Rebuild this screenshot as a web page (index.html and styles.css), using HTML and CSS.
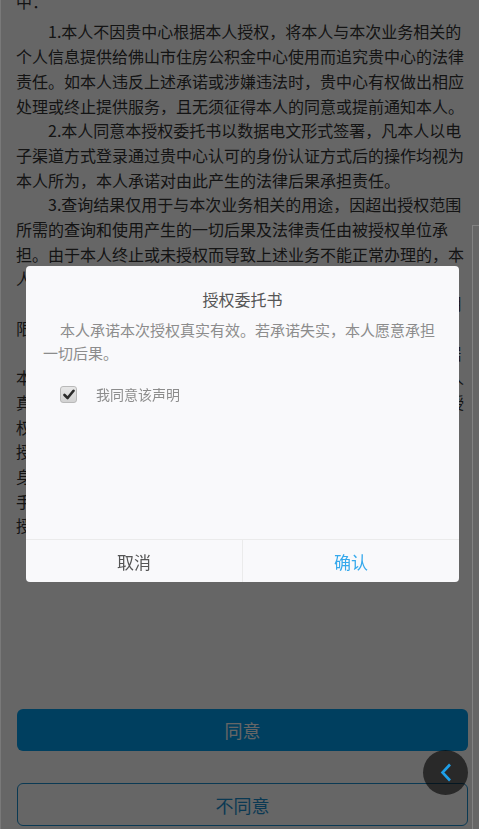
FILE: index.html
```html
<!DOCTYPE html>
<html lang="zh-CN">
<head>
    <meta charset="UTF-8">
    <meta name="viewport" content="width=device-width, initial-scale=1.0">
    <title>授权委托书</title>
    <link rel="stylesheet" href="styles.css">
</head>
<body>
<div class="page">
  <div class="content">
    <p class="lead">本人授权贵中心查询相关信息，并承诺在本次业务办理过程中：</p>
    <p>1.本人不因贵中心根据本人授权，将本人与本次业务相关的个人信息提供给佛山市住房公积金中心使用而追究贵中心的法律责任。如本人违反上述承诺或涉嫌违法时，贵中心有权做出相应处理或终止提供服务，且无须征得本人的同意或提前通知本人。</p>
    <p>2.本人同意本授权委托书以数据电文形式签署，凡本人以电子渠道方式登录通过贵中心认可的身份认证方式后的操作均视为本人所为，本人承诺对由此产生的法律后果承担责任。</p>
    <p>3.查询结果仅用于与本次业务相关的用途，因超出授权范围所需的查询和使用产生的一切后果及法律责任由被授权单位承担。由于本人终止或未授权而导致上述业务不能正常办理的，本人自行承担相应后果。</p>
    <p>4.本授权委托书自本人点击确认按钮时起生效，授权有效期限为本次业务办理完毕之日止。</p>
    <p>5.本人同意贵中心在办理上述业务的过程中，可以直接依据本人提交的信息、资料进行审核，本人确认提交的内容均为本人真实意思表示，如信息不实造成损失，由本人承担法律责任。授权委托书一经确认即生效，本人已仔细阅读并已理解上述内容，授权事项及法律后果均已知悉，同意贵中心据此办理相关业务。身份信息发生变更的，本人应及时告知贵中心并重新进行授权。手机号变更前已发生的查询行为及其后果，仍由本人自行承担。授权单位应妥善保管本人信息，不得用于其他用途。</p>
  </div>
  <div class="actions">
    <button class="btn btn-primary" type="button">同意</button>
    <button class="btn btn-outline" type="button">不同意</button>
  </div>
</div>

<div class="mask"></div>
<div class="scroll-edge"></div>

<div class="dialog">
  <div class="dialog-title">授权委托书</div>
  <p class="dialog-text">本人承诺本次授权真实有效。若承诺失实，本人愿意承担一切后果。</p>
  <label class="agree">
    <span class="check">
      <svg width="12" height="11" viewBox="0 0 12 11"><path d="M1.5 6 L4.6 9 L10.5 1.8" fill="none" stroke="#2b2b2b" stroke-width="2.6" stroke-linecap="round" stroke-linejoin="round"/></svg>
    </span>
    <span class="agree-text">我同意该声明</span>
  </label>
  <div class="dialog-footer">
    <button class="dialog-btn" type="button">取消</button>
    <button class="dialog-btn confirm" type="button">确认</button>
  </div>
</div>

<button class="back" type="button">
  <svg width="12" height="19" viewBox="0 0 12 19"><path d="M10 1.5 L2.5 9.5 L10 17.5" fill="none" stroke="#1e9fe8" stroke-width="2.6"/></svg>
</button>
</body>
</html>
```

FILE: styles.css
```css
* {
  box-sizing: border-box;
}
html,
body {
  margin: 0;
  height: 100%;
}
body {
  font-family: "Noto Sans CJK SC", "Noto Sans", sans-serif;
  background-color: #fff;
  color: #333;
  overflow: hidden;
}
button {
  font-family: inherit;
  border: none;
  cursor: pointer;
}
.page {
  height: 829px;
}
.content {
  margin-top: -36px;
  padding: 0 13px 0 16px;
  font-size: 16px;
  line-height: 24.7px;
  text-spacing-trim: space-all;
}
.content p {
  margin: 0;
  text-indent: 2em;
}
.content p.lead {
  margin-bottom: 6px;
}
.actions {
  margin-top: 171px;
  padding: 0 11px 0 17px;
  display: flex;
  flex-direction: column;
  gap: 32px;
}
.btn {
  width: 100%;
  height: 42px;
  border-radius: 6px;
  font-size: 18px;
}
.btn-primary {
  background-color: #009ded;
  color: #fff;
}
.btn-outline {
  height: 43px;
  background-color: #fff;
  border: 1px solid #1a8fd0;
  color: #1a8fd0;
}
.mask {
  position: fixed;
  top: 0;
  left: 0;
  right: 0;
  bottom: 0;
  background-color: rgba(0, 0, 0, 0.6);
  border-left: 1px solid rgba(255, 255, 255, 0.12);
}
.scroll-edge {
  position: fixed;
  left: 472px;
  top: 225px;
  right: 0;
  bottom: 0;
  border-left: 1px solid rgba(255, 255, 255, 0.18);
  border-top: 1px solid rgba(255, 255, 255, 0.18);
}
.dialog {
  position: fixed;
  left: 26px;
  top: 266px;
  width: 433px;
  height: 316px;
  background-color: #f9f9fb;
  border-radius: 4px;
  display: flex;
  flex-direction: column;
  padding-top: 21px;
}
.dialog-title {
  text-align: center;
  font-size: 16px;
  line-height: 24px;
  color: #555;
}
.dialog-text {
  margin: 7px 0 0;
  padding: 0 16px 0 17px;
  font-size: 15px;
  line-height: 23px;
  text-indent: 17px;
  color: #8c8c8c;
}
.agree {
  display: flex;
  align-items: center;
  margin: 20px 0 0 34px;
  height: 20px;
}
.check {
  width: 17px;
  height: 17px;
  border: 1px solid #b9b9b9;
  border-radius: 3px;
  background: linear-gradient(#e6e6e6, #d2d2d2);
  display: flex;
  align-items: center;
  justify-content: center;
}
.agree-text {
  margin-left: 19px;
  font-size: 14px;
  color: #8c8c8c;
}
.dialog-footer {
  margin-top: auto;
  height: 43px;
  border-top: 1px solid #ebebeb;
  display: flex;
}
.dialog-btn {
  flex: 1;
  background: none;
  font-size: 17px;
  color: #555;
}
.dialog-btn.confirm {
  border-left: 1px solid #ebebeb;
  color: #36a9ec;
}
.back {
  position: fixed;
  left: 423px;
  top: 750px;
  width: 45px;
  height: 45px;
  border-radius: 50%;
  background-color: rgba(0, 0, 0, 0.6);
  display: flex;
  align-items: center;
  justify-content: center;
  padding: 0;
}
```
